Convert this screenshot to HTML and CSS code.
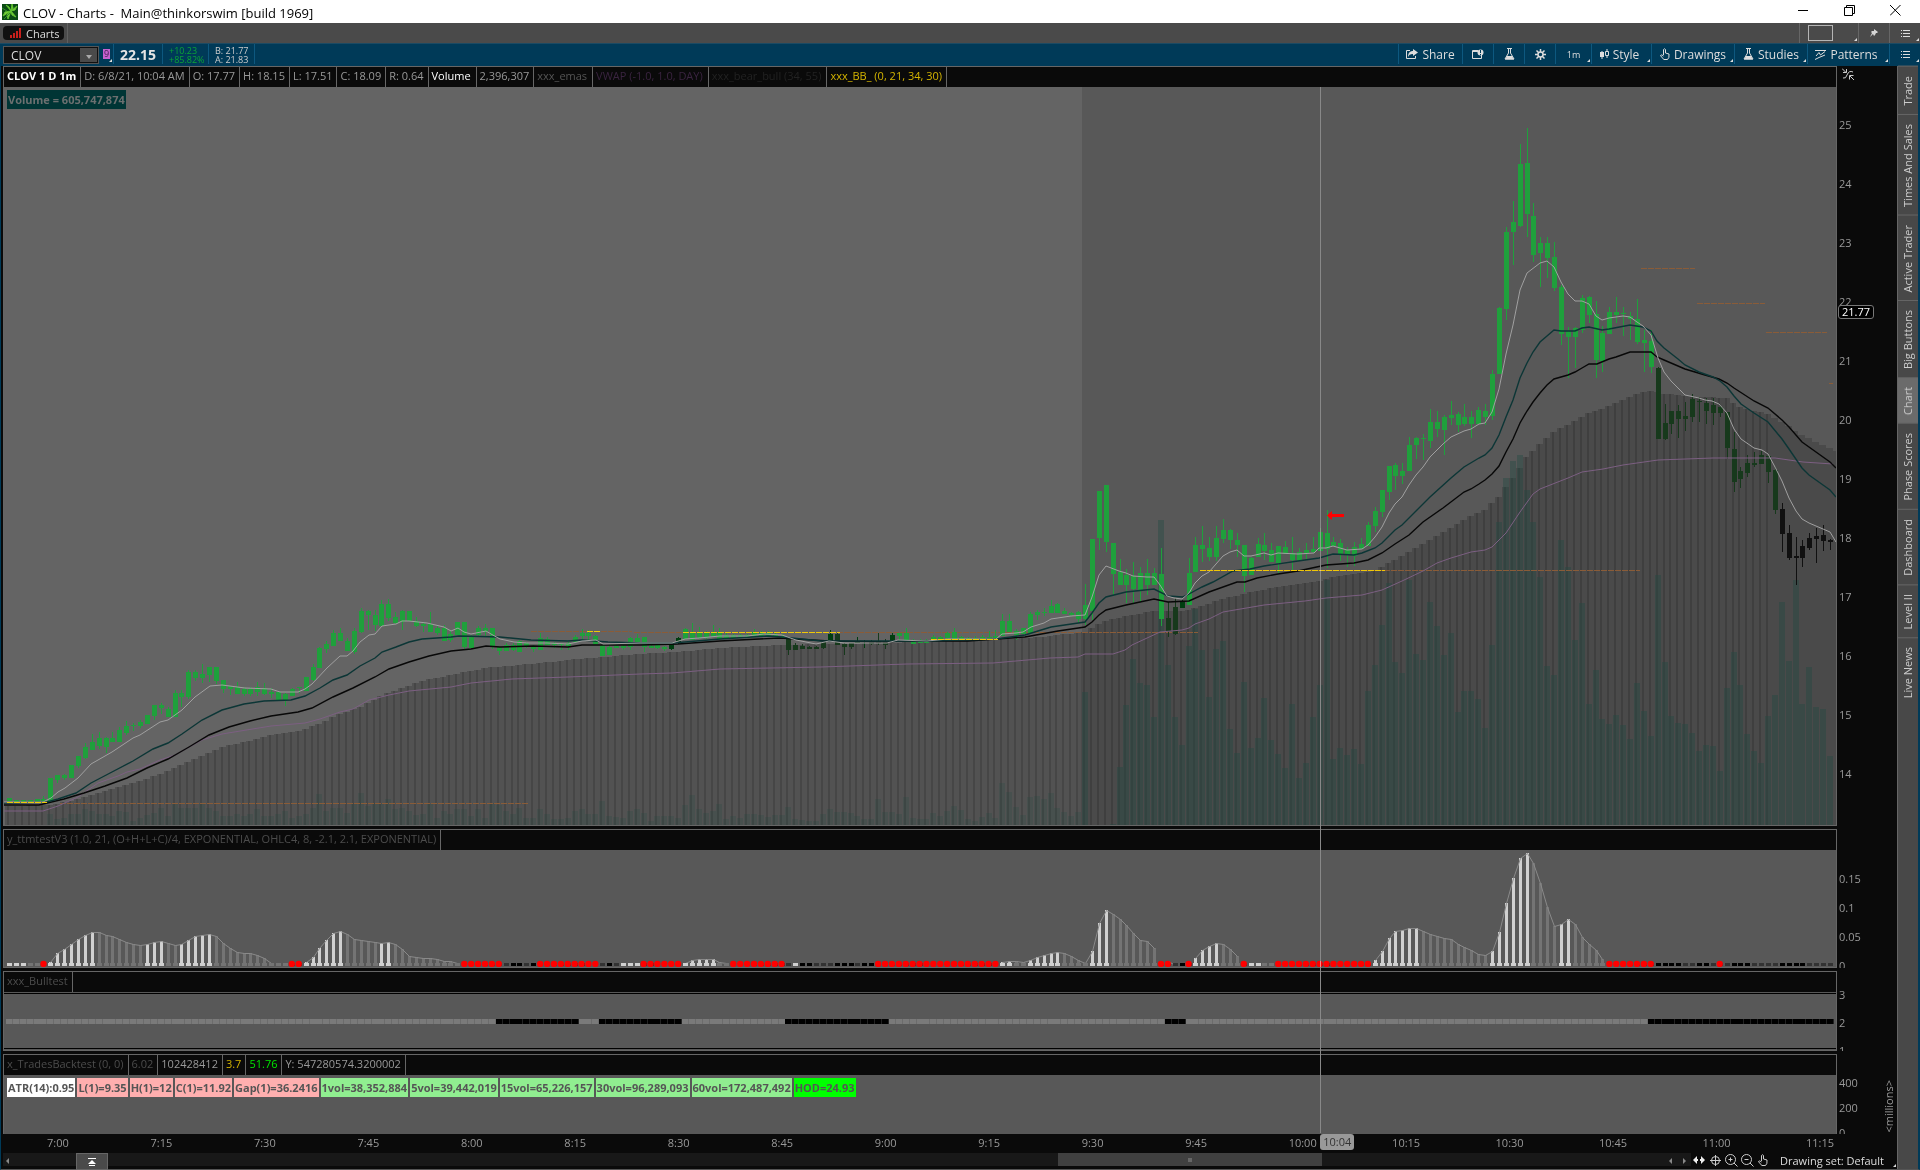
FILE: index.html
```html
<!DOCTYPE html>
<html lang="en">
<head>
    <meta charset="UTF-8">
    <meta name="viewport" content="width=device-width, initial-scale=1.0">
    <title>CLOV - Charts - Main@thinkorswim [build 1969]</title>
    <link rel="stylesheet" href="styles.css">
</head>
<body>
    <!-- Window title bar -->
    <header class="titlebar">
        <svg class="app-icon" viewBox="0 0 16 16" aria-hidden="true">
            <rect width="16" height="16" fill="#0b4a14"/>
            <path d="M9 7L4 1L7 3ZM9 7L10 0L11 4ZM9 7L15 2L13 6ZM9 7L14 13L10 11ZM9 7L6 15L5 11ZM9 7L1 12L3 8Z" fill="#7fd43a" stroke="#5fc030"/>
            <path d="M0 4L5 7M2 15L8 9" stroke="#2f8f28"/>
        </svg>
        <h1>CLOV - Charts -&nbsp; Main@thinkorswim [build 1969]</h1>
        <div class="window-buttons">
            <button aria-label="Minimize"><svg width="11" height="11"><path d="M0 5.500H10" stroke="#000"/></svg></button>
            <button aria-label="Restore"><svg width="11" height="11" fill="none" stroke="#000"><path d="M.5 2.500H8.500V10.500H.5ZM2.500 2.500V.5H10.500V8.500H8.500"/></svg></button>
            <button aria-label="Close"><svg width="11" height="11"><path d="M0 0L10.500 10.500M10.500 0L0 10.500" stroke="#000"/></svg></button>
        </div>
    </header>

    <!-- Tabs row -->
    <nav class="tabbar" aria-label="Tabs">
        <div class="tab-slot">
            <a class="tab" href="#charts">
                <svg width="11" height="10" fill="#c8201c"><path d="M0 7H2V10H0ZM3 5H5V10H3ZM6 3H8V10H6ZM9 0H11V10H9Z"/></svg>
                Charts
            </a>
        </div>
        <div class="tab-tools">
            <button class="tool grid-tool corner" aria-label="Grid"><span class="grid-box"></span></button>
            <button class="tool pin-tool" aria-label="Pin"><svg width="8" height="8" fill="#d5d5d5"><path d="M4 0L8 3L7 4L6 4L5 6L4 7L3 5L0 8L2 4L1 3L2 2L4 2Z"/></svg></button>
            <button class="tool menu-tool corner" aria-label="Menu"><svg width="9" height="9" stroke="#ddd"><path d="M0 1.500H1M2 1.500H9M0 4.500H1M2 4.500H9M0 7.500H1M2 7.500H9"/></svg></button>
        </div>
    </nav>

    <!-- Symbol and chart toolbar -->
    <div class="toolbar">
        <form class="symbol">
            <input type="text" value="CLOV" aria-label="Symbol">
            <button type="button" aria-label="Symbol list"><svg width="6" height="4" fill="#aaa"><path d="M0 0H6L3 4Z"/></svg></button>
        </form>
        <button class="link-color corner" aria-label="Link group"><span>9</span></button>
        <strong class="last">22.15</strong>
        <div class="quote up"><span>+10.23</span><span>+85.82%</span></div>
        <div class="quote"><span>B: 21.77</span><span>A: 21.83</span></div>
        <div class="chart-tools">
            <button class="tool wide"><svg width="12" height="10"><path d="M4 1.500H.5V9.500H9.500V7" fill="none" stroke="#ddd"/><path d="M7 0L12 3.500L7 7V5C4 5 3 6 2 8C2 4 4 2 7 2Z" fill="#ddd"/></svg>Share</button>
            <button class="tool" aria-label="Alerts"><svg width="12" height="10"><path d="M6 1.500H.5V9.500H9.500V6M.5 2.500H6" fill="none" stroke="#ddd"/><circle cx="8.500" cy="3.500" r="3" fill="#ddd"/><path d="M8.500 1V4M8.500 5V6" stroke="#003a58"/></svg></button>
            <button class="tool" aria-label="Studies lab"><svg width="11" height="12"><path d="M3 .5H8M4.500 .5V5L1 11H10L6.500 5V.5" fill="none" stroke="#ddd"/><path d="M3 8H8L10 11.500H1Z" fill="#ddd"/></svg></button>
            <button class="tool" aria-label="Settings"><svg width="11" height="11"><path d="M5.500 0V11M0 5.500H11M1.500 1.500L9.500 9.500M9.500 1.500L1.500 9.500" stroke="#ddd" stroke-width="1.500"/><circle cx="5.500" cy="5.500" r="2.500" fill="#003a58" stroke="#ddd" stroke-width="1.500"/></svg></button>
            <button class="tool mid corner small">1m</button>
            <button class="tool style corner"><svg width="9" height="10" fill="#ddd"><path d="M0 3H4V8H0ZM1.500 2H2.500V10H1.500Z"/><path d="M5.500 2.500H8.500V6.500H5.500ZM7 0V2.500M7 6.500V9" fill="none" stroke="#ddd"/></svg>Style</button>
            <button class="tool drawings corner"><svg width="10" height="12" fill="none" stroke="#ddd"><path d="M3.500 7V1.500Q4.500 0 5.500 1.500V5L9 6Q9.500 10 7.500 11.500H4Q2 10 .5 7.500Q1.500 6 3.500 8"/></svg>Drawings</button>
            <button class="tool studies corner"><svg width="11" height="12"><path d="M3 .5H8M4.500 .5V5L1 11H10L6.500 5V.5" fill="none" stroke="#ddd"/><path d="M3 8H8L10 11.500H1Z" fill="#ddd"/></svg>Studies</button>
            <button class="tool patterns corner"><svg width="11" height="11" fill="none" stroke="#ddd"><path d="M0 1.500H11M1 7L4 3.500L5.500 6L10 2.500M0 10.500L4 8.500L10 6"/></svg>Patterns</button>
            <button class="tool corner" aria-label="More"><svg width="9" height="9" stroke="#ddd"><path d="M0 1.500H1M2 1.500H9M0 4.500H1M2 4.500H9M0 7.500H1M2 7.500H9"/></svg></button>
        </div>
    </div>

    <div class="workspace">
        <main class="charts" id="charts">
            <!-- Price -->
            <section class="panel price">
                <div class="frame">
                    <ul class="readout">
                        <li class="bright bold">CLOV 1 D 1m</li>
                        <li>D: 6/8/21, 10:04 AM</li>
                        <li>O: 17.77</li>
                        <li>H: 18.15</li>
                        <li>L: 17.51</li>
                        <li>C: 18.09</li>
                        <li>R: 0.64</li>
                        <li class="bright">Volume</li>
                        <li>2,396,307</li>
                        <li class="dim">xxx_emas</li>
                        <li class="purple">VWAP (-1.0, 1.0, DAY)</li>
                        <li class="faint">xxx_bear_bull (34, 55)</li>
                        <li class="gold">xxx_BB_ (0, 21, 34, 30)</li>
                    </ul>
                    <div class="plot">
                        <svg id="price" viewBox="4 87 1832 738" preserveAspectRatio="none" role="img" aria-label="CLOV one minute candles"></svg>
                        <span class="volume-label">Volume = 605,747,874</span>
                    </div>
                </div>
                <div class="axis">
                    <svg class="axis-icon" width="12" height="12" fill="none" stroke="#ccc"><path d="M0 .5L4 4.500M4.500 1V4.500H1M1 10Q4 11 5 7Q7 2 11 4M8 8L12 12M7.500 11.500V7.500H11.500"/></svg>
                    <span>25</span><span>24</span><span>23</span><span>22</span><span>21</span><span>20</span>
                    <span>19</span><span>18</span><span>17</span><span>16</span><span>15</span><span>14</span>
                    <b class="last-tag">21.77</b>
                </div>
            </section>

            <!-- Squeeze histogram -->
            <section class="panel squeeze">
                <div class="frame">
                    <ul class="readout">
                        <li class="mute">y_ttmtestV3 (1.0, 21, (O+H+L+C)/4, EXPONENTIAL, OHLC4, 8, -2.1, 2.1, EXPONENTIAL)</li>
                    </ul>
                    <div class="plot"><svg id="squeeze" viewBox="4 850 1832 117" preserveAspectRatio="none" role="img" aria-label="Squeeze histogram"></svg></div>
                </div>
                <div class="axis"><span>0.15</span><span>0.1</span><span>0.05</span><span>0</span></div>
            </section>

            <section class="panel bulltest">
                <div class="frame">
                    <ul class="readout"><li class="mute">xxx_Bulltest</li></ul>
                    <div class="plot"><svg id="bulltest" viewBox="4 992 1832 58" preserveAspectRatio="none" role="img" aria-label="Bull test"></svg></div>
                </div>
                <div class="axis"><span>3</span><span>2</span><span>1</span></div>
            </section>

            <section class="panel backtest">
                <div class="frame">
                    <ul class="readout">
                        <li class="mute">x_TradesBacktest (0, 0)</li>
                        <li class="mute">6.02</li>
                        <li>102428412</li>
                        <li class="gold">3.7</li>
                        <li class="lime">51.76</li>
                        <li>Y: 547280574.3200002</li>
                    </ul>
                    <div class="plot">
                        <ul class="labels">
                            <li class="white">ATR(14):0.95</li>
                            <li class="pink">L(1)=9.35</li>
                            <li class="pink">H(1)=12</li>
                            <li class="pink">C(1)=11.92</li>
                            <li class="pink">Gap(1)=36.2416</li>
                            <li>1vol=38,352,884</li>
                            <li>5vol=39,442,019</li>
                            <li>15vol=65,226,157</li>
                            <li>30vol=96,289,093</li>
                            <li>60vol=172,487,492</li>
                            <li class="hod">HOD=24.93</li>
                        </ul>
                    </div>
                </div>
                <div class="axis"><span>400</span><span>200</span><span>0</span><i class="unit">&lt;millions&gt;</i></div>
            </section>
            <div class="crosshair"></div>

            <!-- Time scale -->
            <div class="times">
                <span>7:00</span><span>7:15</span><span>7:30</span><span>7:45</span><span>8:00</span><span>8:15</span>
                <span>8:30</span><span>8:45</span><span>9:00</span><span>9:15</span><span>9:30</span><span>9:45</span>
                <span>10:00</span><span>10:15</span><span>10:30</span><span>10:45</span><span>11:00</span><span>11:15</span>
                <b class="time-tag">10:04</b>
            </div>

            <footer class="bottombar">
                <div class="track">
                    <button class="arrow" aria-label="Scroll left"><svg width="3" height="6" fill="#888"><path d="M3 0V6L0 3Z"/></svg></button>
                    <button class="collapse" aria-label="Collapse"><svg width="8" height="8" fill="#fff"><path d="M0 0H8V1H0ZM4 2L8 6H0ZM1 7H7V8H1Z"/></svg></button>
                    <div class="thumb"><span></span></div>
                    <button class="arrow left" aria-label="Step left"><svg width="3" height="6" fill="#888"><path d="M3 0V6L0 3Z"/></svg></button>
                    <button class="arrow" aria-label="Step right"><svg width="3" height="6" fill="#888"><path d="M0 0V6L3 3Z"/></svg></button>
                </div>
                <div class="zoom-tools">
                    <button aria-label="Pan"><svg width="12" height="8" fill="#eee"><path d="M0 4L4 0V3H5V5H4V8ZM12 4L8 0V3H7V5H8V8Z"/></svg></button>
                    <button aria-label="Crosshair"><svg width="11" height="11" fill="none" stroke="#ccc"><circle cx="5.500" cy="5.500" r="4"/><path d="M5.500 0V11M0 5.500H11"/></svg></button>
                    <button aria-label="Zoom in"><svg width="13" height="13" fill="none" stroke="#ccc"><circle cx="5.500" cy="5.500" r="5"/><path d="M3.500 5.500H7.500M5.500 3.500V7.500M9 9L12.500 12.500"/></svg></button>
                    <button aria-label="Zoom out"><svg width="13" height="13" fill="none" stroke="#ccc"><circle cx="5.500" cy="5.500" r="5"/><path d="M3.500 5.500H7.500M9 9L12.500 12.500"/></svg></button>
                    <button aria-label="Select"><svg width="10" height="12" fill="none" stroke="#ccc"><path d="M3.500 7V1.500Q4.500 0 5.500 1.500V5L9 6Q9.500 10 7.500 11.500H4Q2 10 .5 7.500Q1.500 6 3.500 8"/></svg></button>
                </div>
                <button class="drawing-set corner">Drawing set: Default</button>
            </footer>
        </main>

        <!-- Right gadget tabs -->
        <nav class="sidebar" aria-label="Gadgets">
            <a href="#trade">Trade</a>
            <a href="#times-and-sales">Times And Sales</a>
            <a href="#active-trader">Active Trader</a>
            <a href="#big-buttons">Big Buttons</a>
            <a href="#charts" class="selected">Chart</a>
            <a href="#phase-scores">Phase Scores</a>
            <a href="#dashboard">Dashboard</a>
            <a href="#level-ii">Level II</a>
            <a href="#live-news">Live News</a>
        </nav>
    </div>
    <script src="chart.js"></script>
</body>
</html>
```
FILE: styles.css
```css
* {
    box-sizing: border-box;
}

body {
    margin: 0;
    min-height: 100vh;
    display: flex;
    flex-direction: column;
    background: #0a0a0a;
    color: #999;
    font-family: "Open Sans", "Noto Sans", sans-serif;
    font-size: 11px;
}

ul {
    list-style: none;
    margin: 0;
    padding: 0;
}

a {
    color: inherit;
    text-decoration: none;
}

button {
    font: inherit;
    color: inherit;
    background: none;
    border: 0;
    padding: 0;
    cursor: pointer;
}

svg {
    flex-shrink: 0;
}

/* title bar */
.titlebar {
    display: flex;
    align-items: center;
    height: 23px;
    padding: 0 2px;
    background: #fff;
    color: #000;
}

.app-icon {
    width: 16px;
    height: 16px;
}

.titlebar h1 {
    margin: 0 auto 0 5px;
    font-size: 13px;
    font-weight: normal;
    padding-top: 2px;
}

.window-buttons {
    display: flex;
}

.window-buttons button {
    width: 46px;
    height: 20px;
}

/* tabs row */
.tabbar {
    display: flex;
    justify-content: space-between;
    height: 20px;
    background: #4a4a4a;
}

.tab-slot {
    display: flex;
    align-items: center;
    padding: 0 3px;
    border-right: 1px solid #606060;
}

.tab {
    display: flex;
    align-items: center;
    gap: 5px;
    height: 14px;
    padding: 0 5px 0 7px;
    background: #101010;
    border-radius: 4px;
    color: #ddd;
}

.tab-tools,
.chart-tools {
    display: flex;
}

.tool {
    display: flex;
    align-items: center;
    justify-content: center;
    gap: 4px;
    width: 31px;
    border-left: 1px solid #666;
    color: #ddd;
    font-size: 12px;
}

.corner {
    position: relative;
}

.corner::after {
    content: "";
    position: absolute;
    right: 1px;
    bottom: 2px;
    border: solid transparent;
    border-width: 0 0 3px 3px;
    border-bottom-color: #ddd;
}

.grid-tool {
    width: 59px;
    justify-content: flex-start;
    padding-left: 8px;
}

.grid-box {
    width: 25px;
    height: 16px;
    border: 1px solid #b5b5b5;
}

/* toolbar */
.toolbar {
    display: flex;
    height: 23px;
    padding: 0 0 2px 3px;
    background: #003a58;
    border-top: 1px solid #1b4a63;
}

.symbol {
    display: flex;
    width: 96px;
    height: 18px;
    margin-top: 2px;
    background: #101010;
    border: 1px solid #555;
}

.symbol input {
    flex: 1;
    min-width: 0;
    padding: 0 0 0 7px;
    background: none;
    border: 0;
    color: #ddd;
    font: 12px "Open Sans", sans-serif;
}

.symbol button {
    width: 17px;
    margin: 1px;
    background: #4a4a4a;
    line-height: 8px;
}

.link-color {
    width: 15px;
    display: flex;
    padding: 5px 0 0 4px;
    border-right: 1px solid #0d587f;
}

.link-color span {
    width: 7px;
    height: 10px;
    background: #c561cf;
    color: #402050;
    font-size: 9px;
    line-height: 9px;
    text-align: center;
}

.last {
    width: 49px;
    padding-left: 6px;
    border-right: 1px solid #0d587f;
    color: #e4e4e4;
    font-size: 14px;
    line-height: 22px;
}

.quote {
    display: flex;
    flex-direction: column;
    width: 46px;
    padding: 2px 0 0 6px;
    border-right: 1px solid #0d587f;
    color: #ccc;
    font-size: 9px;
    line-height: 9px;
}

.quote.up {
    color: #0ba336;
}

.chart-tools {
    margin-left: auto;
}

.chart-tools .tool {
    border-left-color: #0d587f;
}

.chart-tools .wide { width: 64px; }
.chart-tools .mid { width: 36px; }
.chart-tools .small { font-size: 9px; }
.chart-tools .style { width: 60px; padding-right: 4px; }
.chart-tools .drawings { width: 83px; }
.chart-tools .studies { width: 73px; }
.chart-tools .patterns { width: 82px; padding-right: 4px; }

/* chart area */
.workspace {
    flex: 1;
    display: flex;
    border-left: 1px solid #003a58;
    border-right: 2px solid #003a58;
    border-bottom: 1px solid #555;
}

.charts {
    flex: 1;
    min-width: 0;
    display: flex;
    flex-direction: column;
    position: relative;
    padding-left: 2px;
}

.panel {
    display: flex;
    margin-bottom: 3px;
}

.frame {
    flex: 1;
    min-width: 0;
    display: flex;
    flex-direction: column;
    border: 1px solid #666;
}

.readout {
    display: flex;
    height: 20px;
    background: #0a0a0a;
    white-space: nowrap;
}

.readout li {
    padding: 0 4px 0 3px;
    border-right: 1px solid #666;
    line-height: 18px;
}

.bright { color: #fff; }
.bold { font-weight: bold; }
.dim { color: #555; }
.mute { color: #4c4c4c; }
.purple { color: #3a2440; }
.faint { color: #222; }
.gold { color: #d4b400; }
.lime { color: #00e800; }

.readout .dim,
.readout .purple,
.readout .faint,
.readout .bright {
    padding-right: 5px;
}

.readout .bold {
    padding-right: 4px;
}

.plot {
    flex: 1;
    position: relative;
    background: #585858;
}

.plot svg {
    display: block;
    position: absolute;
    width: 100%;
    height: 100%;
}

.volume-label {
    position: absolute;
    top: 3px;
    left: 3px;
    padding: 0 1px;
    background: #003535;
    color: #6c7070;
    font-weight: bold;
    line-height: 19px;
}

.axis {
    width: 60px;
    display: flex;
    flex-direction: column;
    position: relative;
    overflow: hidden;
    padding-left: 2px;
    font-size: 11px;
}

.axis span {
    display: flex;
    flex-shrink: 0;
    align-items: center;
}

.axis-icon {
    position: absolute;
    left: 5px;
    top: 2px;
}

.price {
    flex: 1;
}

.price .axis {
    padding-top: 29px;
    padding-bottom: 23px;
}

.price .axis span {
    flex: 1;
}

.last-tag {
    position: absolute;
    top: 31.5%;
    left: 1px;
    padding: 0 3px;
    background: #000;
    border: 1px solid #777;
    border-radius: 3px;
    color: #fff;
    font-weight: normal;
    line-height: 12px;
}

.squeeze { height: 139px; }
.squeeze .axis { padding-top: 35px; }
.squeeze .axis span { height: 29px; }

.bulltest { height: 80px; }
.bulltest .axis { padding-top: 9px; }
.bulltest .axis span { height: 28px; }

.backtest { height: 80px; margin-bottom: 0; }
.backtest .axis { padding-top: 16px; }
.backtest .axis span { height: 25px; }
.backtest .frame { border-bottom: 0; }

.unit {
    position: absolute;
    right: 1px;
    bottom: 2px;
    writing-mode: vertical-rl;
    transform: rotate(180deg);
    font-style: normal;
}

.labels {
    display: flex;
    gap: 2px;
    padding: 3px;
    color: #555;
    font-weight: bold;
    line-height: 19px;
    white-space: nowrap;
}

.labels li {
    padding: 0 1px;
    background: #90ee90;
}

.labels .white { background: #fff; }
.labels .pink { background: #ffafaf; }
.labels .hod { background: #0f0; }

.crosshair {
    position: absolute;
    left: 69.55%;
    top: 21px;
    bottom: 36px;
    width: 1px;
    background: #888;
    mix-blend-mode: lighten;
}

.times {
    display: flex;
    position: relative;
    height: 19px;
    padding-left: 44px;
    line-height: 18px;
}

.times span {
    flex: 1;
}

.times span:last-of-type {
    flex: 0 0 91px;
}

.time-tag {
    position: absolute;
    left: 69.55%;
    top: 0;
    width: 34px;
    background: #999;
    border-radius: 3px;
    color: #333;
    font-weight: normal;
    line-height: 16px;
    text-align: center;
}

.bottombar {
    display: flex;
    height: 16px;
    color: #ddd;
}

.track {
    flex: 1;
    display: flex;
    height: 13px;
    background: #181818;
}

.arrow {
    width: 14px;
    line-height: 8px;
}

.arrow.left {
    margin-left: auto;
}

.track .arrow:first-child {
    width: 8px;
}

.collapse {
    width: 32px;
    height: 17px;
    margin-left: 65px;
    background: #4a4a4a;
    border: 1px solid #666;
}

.thumb {
    display: flex;
    align-items: center;
    justify-content: center;
    width: 264px;
    margin-left: 950px;
    background: #404040;
}

.thumb span {
    width: 4px;
    height: 4px;
    background: #666;
}

.zoom-tools {
    display: flex;
    align-items: center;
    height: 14px;
}

.zoom-tools button {
    width: 16px;
    line-height: 8px;
}

.drawing-set {
    width: 126px;
    padding-right: 4px;
    font-size: 11px;
    line-height: 12px;
}

/* gadget tabs */
.sidebar {
    width: 21px;
    background: #484848;
    border-left: 1px solid #666;
}

.sidebar a {
    display: block;
    padding: 8px 0 9px;
    border-bottom: 1px solid #666;
    color: #ccc;
    font-size: 11px;
    line-height: 20px;
    writing-mode: vertical-rl;
    transform: rotate(180deg);
}

.sidebar .selected {
    background: #6b6b6b;
}
```
FILE: chart.js
```js
const NS = 'http://www.w3.org/2000/svg';
const barX = i => 9 + i * 6.898;

function add(svg, tag, attrs) {
    const el = document.createElementNS(NS, tag);
    for (const key in attrs) el.setAttribute(key, attrs[key]);
    svg.appendChild(el);
}

function rect(svg, x, y, width, height, fill, opacity = 1) {
    add(svg, 'rect', { x: Math.round(x), y: Math.round(y), width, height: Math.max(1, Math.round(height)), fill, 'fill-opacity': opacity });
}

// [high, body top, body bottom, low], thirds of a pixel under base; low left out when equal to bottom
const sessions = [
    { base: 560, bars: [
        [714,714,724],[720,720,726],[720,720,726],[720,720,726],[717,717,726],[707,717,724],[654,654,724],[645,645,660,668],
        [643,645,654,662],[615,615,654],[588,588,618,625],[550,560,592,597],[523,545,570],[515,533,558,565],[530,533,560,577],[516,533,545],
        [500,509,545],[484,497,519,526],[490,495,497,515],[480,487,500,503],[465,465,491],[435,435,467,480],[428,435,443,460],[440,447,471],
        [390,399,472],[390,400,411,440],[330,336,411,416],[330,336,354,362],[313,342,354,371],[321,321,345,365],[321,321,362,372],[360,360,386,400],
        [378,378,388,405],[367,380,402],[380,386,402,407],[380,388,402,408],[367,380,396,410],[370,383,400,405],[383,395,400,412],[397,397,420,425],
        [400,402,420,438],[385,388,410],[380,382,384,398],[350,350,392],[313,321,360,365],[260,263,324],[243,252,266,278],[210,220,258],
        [205,220,244],[235,243,272],[205,212,274,282],[145,153,215,220],[150,153,165,210],[150,165,195,212],[120,131,197],[118,131,173,185],
        [157,170,188,192],[150,153,186,210],[153,153,182],[172,182,197,203],[185,192,197,215],[157,192,215],[195,203,217,225],[195,203,242],
        [212,221,240,245],[186,186,225],[186,186,261,266],[225,228,264],[197,203,225,230],[192,203,215,230],[205,205,262,268],[260,262,273,285],
        [250,255,272],[250,255,270,275],[240,242,275],[245,250,262],[255,258,266,275],[220,234,270],[230,236,255],[245,250,257,262],
        [250,253,257,272],[245,248,257,270],[225,230,245],[208,220,230,242],[210,218,227,240],[225,228,252],[255,255,288],[255,262,286],
        [250,258,265],[255,258,265,270],[230,234,262,270],[222,234,245],[230,232,263,275],[252,257,264],[250,256,264,268],[258,261,267,272],
        [250,253,267,272],[230,234,250],[205,208,238],[190,215,238],[200,217,235],[212,220,235],[195,215,230],[205,215,235],
        [218,225,235],[222,226,234],[222,226,232],[222,226,234],[208,215,230],[212,220,228],[212,218,228],[218,222,230],
        [222,228,235],[230,237,269,283],[250,255,269],[252,259,267],[258,261,267],[258,261,267],[245,247,266],[210,221,242],
        [218,221,255],[250,252,260,286],[248,250,262,266],[232,243,248],[240,244,248,265],[240,246,252,255],[220,244,250,256],[238,244,255,268],
        [220,225,244],[218,220,228,240],[205,220,248],[238,242,250],[236,242,247],[236,240,248],[225,230,240],[227,231,240],
        [215,220,235],[205,215,235],[228,232,240],[230,234,240],[228,233,240],[225,230,240],[213,230,238],[210,228,234],
        [163,183,228],[163,183,215],[208,212,225,240],[203,205,222],[155,161,217],[150,155,165,180],[145,156,158,168],[120,137,158],
        [130,132,158],[145,153,163],[155,159,166],[153,156,178,190]
    ] },
    { base: 400, bars: [
        [552,615,657,675],[417,417,632,660],[273,273,414,450],[255,255,426,455],[430,430,522,585],[478,516,555],[508,525,555,610],[485,527,567,612],
        [500,518,570,605],[478,518,555,585],[503,519,555],[445,522,657,680],[605,654,693,710],[595,620,702,706],[600,606,624],[475,519,615],
        [412,435,516],[378,435,447,485],[412,444,471,485],[378,414,471,483],[358,390,417,430],[388,390,420,447],[398,420,435,470],[435,435,528,575],
        [470,474,525],[415,432,471],[398,435,453,480],[430,450,486],[438,438,490,520],[422,441,462],[410,460,480,515],[445,456,483],
        [430,450,460,480],[410,447,457],[385,396,452],[330,399,447,505],[412,426,438],[418,429,465,485],[440,450,465,500],[427,441,468,500],
        [415,432,447],[366,375,438],[322,333,378,398],[270,270,336,350],[198,198,276,300],[190,195,228,270],[190,213,228,253],[112,135,213],
        [110,114,135,175],[103,114,117,180],[28,66,123,145],[33,66,87,112],[45,51,90,165],[3,45,54,75],[35,42,75,95],[12,51,72,78],
        [33,51,72,115]
    ] },
    { base: 110, bars: [
        [890,900,941],[883,903,921,945],[780,792,918,930],[590,594,792],[350,366,597,628],[273,336,366,466],[102,162,348,352],[55,159,312,383],
        [280,318,435,458],[380,399,429,530],[380,399,444,503],[397,441,534,545],[525,531,672,706],[652,663,681,805],[650,654,681,773],[555,564,660,670],
        [558,561,615,638],[573,612,750,803],[648,669,753,787],[592,606,672],[562,606,615,640],[592,609,611,680],[607,618,627,690],[568,627,696,703],
        [660,690,699,785],[660,693,771,790],[770,774,987],[883,939,987,992],[903,903,942,973],[885,903,927,985],[877,918,927,963],[852,867,921,935],
        [860,873,875,935],[863,879,903,942],[863,885,909,943],[885,891,909,920],[906,906,1014,1047],[965,1017,1116,1145],[1072,1083,1107,1135],[1035,1059,1089,1100],
        [1027,1059,1065,1072],[1022,1035,1062],[1035,1038,1086,1118],[1070,1080,1200,1212],[1178,1197,1272,1325],[1245,1269,1344,1350],[1282,1338,1344,1425],[1290,1308,1344,1370],
        [1270,1284,1314,1320],[1253,1278,1287,1358],[1245,1275,1293,1322],[1288,1291,1296,1322]
    ] }
];

// starts at bar 6
const volume = [
    11,6,7,11,11,16,14,11,11,9,14,13,4,7,10,12,17,9,21,17,17,17,21,17,14,9,9,11,9,11,16,9,9,11,14,7,9,11,17,31,14,17,17,12,21,32,19,22,22,26,
    16,17,14,10,11,21,7,14,11,16,16,9,16,7,22,20,14,11,17,7,7,16,11,6,6,7,14,16,11,11,24,9,8,7,14,16,12,4,9,9,9,7,20,30,16,12,14,21,6,9,
    7,11,11,10,8,10,10,18,6,5,4,4,11,16,13,13,12,9,6,6,26,13,13,11,28,7,6,6,12,9,14,19,15,6,4,8,12,7,42,33,18,10,28,29,26,32,17,13,9,13,
    133,0,0,0,1,58,120,166,142,140,108,305,160,108,80,179,216,175,128,176,184,96,72,143,77,87,127,85,71,57,121,47,62,108,140,245,66,77,70,76,61,134,160,200,242,163,152,245,171,165,
    223,199,170,192,113,134,134,126,97,180,303,347,364,370,335,303,248,159,150,285,258,185,222,121,155,106,101,110,100,86,142,114,89,250,163,109,102,101,92,74,80,79,54,137,173,140,91,74,62,109,
    130,223,164,245,121,158,118,116,69
];

const cloud = [[4,806],[50,805],[70,801],[91,795],[112,789],[140,781],[168,771],[189,762],[209,753],[229,745],[250,741],[271,735],[298,731],[320,724],[340,714],[360,707],[382,696],[402,688],[422,681],[451,675],[486,668],[531,664],[568,660],[640,654],[678,652],[720,648],[780,645],[887,643],[1016,639],[1051,636],[1085,632],[1098,624],[1113,619],[1154,611],[1185,611],[1202,606],[1223,599],[1243,594],[1278,587],[1313,582],[1340,576],[1368,572],[1382,567],[1409,552],[1440,534],[1464,520],[1485,510],[1498,498],[1512,479],[1526,458],[1540,444],[1554,432],[1568,425],[1588,413],[1602,409],[1623,400],[1637,394],[1650,391],[1667,394],[1687,396],[1726,398],[1740,407],[1768,414],[1782,422],[1802,435],[1830,448],[1840,453]];

const ema8 = '4,802 43,802 51,798 58,792 65,788 78,778 91,764 112,752 133,738 140,735 160,722 168,720 182,710 195,697 210,686 222,685 245,688 271,689 280,692 298,692 305,689 312,684 327,668 340,656 347,656 353,651 360,642 369,635 375,634 382,626 396,624 402,621 409,621 427,623 444,627 451,631 458,628 464,632 471,634 486,631 491,634 500,639 514,642 527,643 547,643 568,644 582,641 596,640 603,644 640,643 672,643 685,639 699,638 720,636 747,636 764,634 782,635 796,640 816,644 829,641 844,643 887,643 898,640 927,641 948,639 996,639 1002,634 1016,633 1023,632 1031,627 1044,623 1051,619 1071,616 1085,615 1092,597 1099,575 1106,566 1119,571 1126,573 1133,576 1147,577 1154,577 1160,585 1167,596 1174,598 1182,599 1189,593 1195,583 1202,576 1209,572 1223,556 1230,552 1237,550 1244,556 1251,556 1264,553 1271,555 1278,553 1298,554 1314,553 1319,548 1326,548 1333,546 1347,550 1362,549 1368,545 1375,537 1382,527 1389,513 1395,504 1402,497 1409,485 1416,475 1423,467 1430,457 1443,444 1451,437 1464,431 1471,429 1479,424 1485,423 1492,412 1499,389 1506,354 1513,325 1520,290 1527,273 1540,263 1547,261 1554,267 1561,282 1568,294 1575,301 1582,301 1589,304 1596,316 1602,320 1609,318 1623,316 1630,317 1637,322 1643,326 1651,335 1658,358 1664,372 1671,381 1685,395 1699,398 1705,400 1712,401 1719,404 1727,413 1734,429 1741,439 1754,448 1762,450 1768,454 1775,467 1782,481 1789,498 1796,511 1802,519 1809,523 1823,529 1830,532 1836,542';
const ema21 = '4,803 47,802 58,799 76,793 91,783 112,772 133,761 153,749 168,743 182,734 202,720 222,710 244,704 264,701 291,700 305,696 320,688 333,680 347,675 360,666 375,658 382,652 396,647 409,642 422,639 451,637 459,636 500,637 531,640 568,641 582,640 608,642 640,643 672,643 685,642 720,639 768,636 782,637 821,641 891,641 927,641 996,639 1025,635 1051,627 1085,622 1092,613 1099,603 1106,597 1126,592 1154,589 1168,596 1183,597 1189,594 1202,587 1213,582 1233,571 1250,569 1264,566 1298,561 1319,558 1333,554 1354,555 1362,553 1375,548 1382,543 1395,530 1402,525 1416,511 1430,497 1451,478 1464,467 1479,458 1485,455 1492,448 1499,435 1506,417 1513,400 1520,378 1527,363 1533,352 1540,342 1547,336 1554,330 1561,331 1575,331 1582,328 1589,327 1602,330 1609,329 1630,325 1643,327 1651,331 1657,341 1664,348 1678,359 1685,365 1699,372 1713,377 1720,381 1727,387 1734,396 1741,404 1754,413 1768,422 1782,439 1789,449 1802,468 1809,475 1823,485 1830,490 1836,497';
const ema34 = '4,805 39,805 64,799 84,793 105,786 127,778 147,768 168,759 189,747 209,735 229,727 250,721 271,716 298,712 312,708 333,697 353,688 375,677 389,669 409,662 429,656 451,651 471,649 486,646 500,647 533,646 568,647 582,645 640,645 678,644 720,641 780,638 796,639 829,641 887,642 898,641 968,641 1025,637 1058,631 1085,627 1092,622 1099,615 1106,610 1126,605 1154,599 1168,602 1189,601 1209,592 1237,582 1245,582 1257,578 1278,574 1298,571 1326,565 1354,563 1368,560 1382,553 1395,544 1409,535 1423,522 1443,508 1464,492 1471,489 1479,484 1485,480 1492,474 1499,466 1506,452 1513,439 1520,423 1527,411 1533,402 1540,393 1547,385 1554,379 1561,377 1568,375 1575,372 1582,368 1589,364 1597,364 1609,359 1616,357 1630,352 1651,352 1657,357 1664,360 1685,369 1705,375 1719,379 1727,383 1734,388 1754,401 1768,408 1782,420 1789,427 1802,442 1830,462 1836,468';
const vwap = '4,811 43,811 58,806 78,797 98,783 118,776 127,772 140,769 160,760 175,755 202,740 222,734 271,726 305,723 320,719 340,712 353,709 369,700 389,695 409,691 451,687 471,683 512,679 568,677 640,674 672,673 720,669 821,667 907,664 993,663 1050,658 1078,657 1085,654 1113,654 1125,650 1132,645 1160,632 1182,630 1189,628 1195,624 1209,619 1223,612 1264,605 1305,601 1326,598 1362,595 1382,590 1402,581 1423,571 1437,563 1451,558 1471,552 1485,550 1492,547 1506,533 1520,512 1533,494 1540,489 1568,478 1582,472 1603,469 1623,465 1658,460 1713,458 1775,458 1803,462 1833,464';

function cloudY(x) {
    for (let k = 1; k < cloud.length; k++) {
        if (x <= cloud[k][0]) {
            const [x0, y0] = cloud[k - 1];
            const [x1, y1] = cloud[k];
            return y0 + (y1 - y0) * (x - x0) / (x1 - x0);
        }
    }
    return cloud[cloud.length - 1][1];
}

function inRanges(i, ranges) {
    return ranges.some(r => i >= r[0] && i <= r[1]);
}

function drawPrice() {
    const svg = document.getElementById('price');
    const bottom = 825;

    // premarket background
    rect(svg, 4, 87, 1078, 739, '#646464');

    // cloud under the slow average
    for (let i = 0; i < 266; i++) {
        const x = Math.round(barX(i)) - 4;
        const next = Math.round(barX(i + 1)) - 4;
        const y = cloudY(barX(i));
        const pre = i < 156;
        rect(svg, x, y, next - x, bottom - y, pre ? '#525252' : '#4a4a4a');
        if (i < 256) rect(svg, x + 2, y, 2, bottom - y, pre ? '#464646' : '#3f3f3f');
    }
    volume.forEach((h, k) => {
        const i = k + 6;
        if (h) rect(svg, barX(i) - 3, bottom - h, 6, h, '#1f4a42', i < 156 ? 0.22 : 0.38);
    });

    // prior level dashes
    [[60,529,803],[531,632,631],[634,1198,632],[1202,1640,570],[1641,1695,268],[1697,1765,303],[1766,1827,332],[1829,1833,383]].forEach(([a, b, y]) =>
        add(svg, 'path', { d: `M${a} ${y + 0.5}H${b}`, stroke: '#8a5c38', 'stroke-dasharray': '6 1' }));

    let i = 0;
    sessions.forEach(s => s.bars.forEach(b => {
        const y = b.map(v => s.base + v / 3);
        const low = y.length > 3 ? y[3] : y[2];
        const x = Math.round(barX(i));
        let fill = '#1fa03c';
        if (inRanges(i, [[96, 97], [113, 128], [168, 170], [239, 256]])) {
            fill = y[2] > cloudY(x) ? '#17391c' : '#003e10';
        }
        if (i > 256) fill = '#101010';
        rect(svg, x, y[0], 1, low - y[0], fill);
        rect(svg, x - 2, y[1], 5, y[2] - y[1], fill);
        i++;
    }));

    [[vwap, '#7c5f82', 1], [ema34, '#080808', 1.4], [ema21, '#0c3636', 1.4], [ema8, '#a0a0a0', 1]].forEach(([points, stroke, width]) =>
        add(svg, 'polyline', { points, fill: 'none', stroke, 'stroke-width': width }));

    [[7,47,802],[587,600,631],[683,840,632],[931,998,639],[1200,1385,570]].forEach(([a, b, y]) =>
        add(svg, 'path', { d: `M${a} ${y + 0.5}H${b}`, stroke: '#f0c808', 'stroke-dasharray': '6 1' }));

    add(svg, 'path', { d: 'M1327 515.500L1332 511V514H1344V517H1332V520Z', fill: '#f00' });
}

const squeezeRuns = {
    6: [4,13,17,22,27,31,34,34,31,30,27,24,22,21,22,24,25,23,21,22,26,30,31,32,30,23,18,14,13,13,11,8,3],
    43: [4,9,18,26,33,35,32,27,26,25,24,23,24,22,17,10,9,8,8,7,5,5,3],
    98: [3,6,7,7,7,4,3],
    144: [4,5,5,4,6,9,11,13,14,13,10,6,3,15,43,56,52,47,41,33,26,25,18],
    168: [5,1],
    172: [8,16,20,23,22,17,10],
    198: [6,15,28,35,36,38,38,35,32,30,28,27,22,19,16,12,11,15,34,63,88,108,113,103,83,59,40,42,47,42,29,22,16,7]
};
const rising = [[0,2],[6,12],[20,22],[25,29],[43,48],[54,55],[89,91],[98,102],[114,114],[144,145],[148,152],[157,159],[172,175],[180,181],[198,204],[215,220],[225,226]];
const squeezed = [[5,5],[41,42],[66,71],[77,85],[92,97],[105,112],[126,143],[167,168],[171,171],[179,179],[184,197],[232,238],[248,248]];
const black = [[73,74],[76,76],[87,87],[115,116],[120,122],[124,125],[170,170],[239,242],[245,246],[250,252],[257,260]];
const charcoal = [[72,76],[86,88],[113,125],[169,169],[239,264]];

function drawSqueeze() {
    const svg = document.getElementById('squeeze');
    const zero = 966;
    for (const start in squeezeRuns) {
        const points = [];
        squeezeRuns[start].forEach((h, k) => {
            const i = +start + k;
            rect(svg, barX(i) - 1, zero - h, 3, h, inRanges(i, rising) ? '#d0d0d0' : '#747474');
            points.push(`${Math.round(barX(i)) + 0.5},${zero - h + 0.5}`);
        });
        add(svg, 'polyline', { points: points.join(' '), fill: 'none', stroke: '#8a8a8a' });
    }
    for (let i = 0; i < 265; i++) {
        let fill = '#747474';
        if (inRanges(i, rising)) fill = '#d0d0d0';
        else if (inRanges(i, black)) fill = '#000';
        else if (inRanges(i, charcoal) || inRanges(i, squeezed)) fill = '#333';
        rect(svg, barX(i) - 2, 963, 5, 3, fill);
        if (inRanges(i, squeezed)) add(svg, 'circle', { cx: barX(i), cy: 964, r: 3.2, fill: '#f00' });
    }
}

function drawBulltest() {
    const svg = document.getElementById('bulltest');
    rect(svg, 4, 993, 1832, 1, '#000');
    rect(svg, 4, 1048, 1832, 1, '#000');
    for (let i = 0; i < 265; i++) {
        const bear = inRanges(i, [[71,82],[86,97],[113,127],[168,170],[238,264]]);
        const x = Math.round(barX(i)) - 3;
        rect(svg, x, 1019, 7, 5, bear ? '#222' : '#6c6c6c');
        rect(svg, x, 1019, 6, 5, bear ? '#000' : '#7a7a7a');
    }
}

drawPrice();
drawSqueeze();
drawBulltest();
```
